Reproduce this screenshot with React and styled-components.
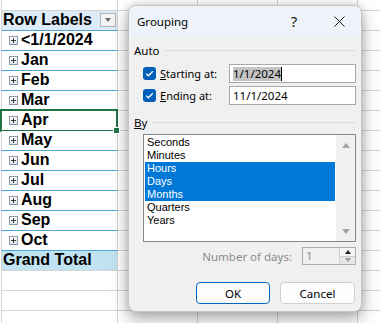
import React from 'react'
import styled, { createGlobalStyle } from 'styled-components'

const GlobalStyle = createGlobalStyle`
  * { box-sizing: border-box; }
  html, body { margin: 0; padding: 0; background: #fff; }
  body { width: 380px; height: 323px; overflow: hidden; }
`

const GRID = '#d4d4d4'
const PIVOT_LINE = '#4ea6dc'

const Sheet = styled.div`
  position: relative;
  width: 380px;
  height: 323px;
  overflow: hidden;
  background: #fff;
`

const Row = styled.div`
  display: flex;
  height: ${(p) => p.$h || 20}px;
  padding-left: 1px;
`

const LabelCell = styled.div`
  position: relative;
  flex: none;
  width: 117px;
  display: flex;
  align-items: flex-end;
  padding: 0 0 1px ${(p) => (p.$indent ? 7 : 1)}px;
  border-left: 1px solid ${GRID};
  border-right: 1px solid ${GRID};
  border-bottom: 1px solid ${(p) => (p.$pivot ? PIVOT_LINE : GRID)};
  background: ${(p) => p.$bg || '#fff'};
  font-family: 'Liberation Sans', Arial, sans-serif;
  font-weight: 700;
  font-size: 16px;
  line-height: 18px;
  color: #000;
  white-space: nowrap;

  ${(p) =>
    p.$selected &&
    `
    &::after {
      content: '';
      position: absolute;
      left: -2px; top: -2px; right: -1px; bottom: -2px;
      border: 2px solid #217346;
    }
    &::before {
      content: '';
      position: absolute;
      right: -3px; bottom: -4px;
      width: 5px; height: 5px;
      background: #217346;
      border: 1px solid #fff;
      z-index: 1;
    }
  `}
`

const Cell = styled.div`
  flex: none;
  width: 80px;
  border-right: 1px solid ${GRID};
  border-bottom: 1px solid ${GRID};
`

const Expand = styled.span`
  flex: none;
  width: 9px;
  height: 9px;
  margin: 0 3px 4px 0;
  border: 1px solid #8a96a8;
  background: linear-gradient(#fdfdfd, #e2e6ec);
  position: relative;
  &::before, &::after {
    content: '';
    position: absolute;
    background: #3b3b3b;
  }
  &::before { left: 1px; right: 1px; top: 3px; height: 1px; }
  &::after { top: 1px; bottom: 1px; left: 3px; width: 1px; }
`

const FilterButton = styled.span`
  position: absolute;
  right: 1px;
  top: 2px;
  width: 16px;
  height: 14px;
  border: 1px solid #b4b4b4;
  background: #f4f4f4;
  display: flex;
  align-items: center;
  justify-content: center;
  &::after {
    content: '';
    border-left: 3.5px solid transparent;
    border-right: 3.5px solid transparent;
    border-top: 4px solid #6b6b6b;
  }
`

/* ---------- dialog ---------- */

const Dialog = styled.div`
  position: absolute;
  left: 128px;
  top: 5px;
  width: 234px;
  height: 307px;
  background: #f0f0f0;
  border: 1px solid #c4c4c4;
  border-radius: 8px;
  box-shadow: 0 8px 18px rgba(0, 0, 0, 0.3), 0 0 8px rgba(0, 0, 0, 0.18);
  display: flex;
  flex-direction: column;
  overflow: hidden;
  font-family: 'Noto Sans', 'Segoe UI', sans-serif;
  font-size: 11px;
  color: #000;
`

const TitleBar = styled.div`
  height: 30px;
  flex: none;
  display: flex;
  align-items: center;
  padding-left: 8px;
  background: #eef3f9;
`

const Title = styled.span`
  flex: 1;
  font-size: 11.5px;
`

const TitleButton = styled.span`
  width: ${(p) => p.$w}px;
  height: 30px;
  display: flex;
  align-items: center;
  justify-content: center;
  font-size: 15px;
  color: #1a1a1a;
`

const Body = styled.div`
  flex: 1;
  display: flex;
  flex-direction: column;
  padding: 0 6px 0 5px;
`

const SectionHead = styled.div`
  display: flex;
  align-items: center;
  gap: 5px;
  height: 16px;
  margin-top: ${(p) => p.$mt}px;
  font-size: 11.5px;
  &::after {
    content: '';
    flex: 1;
    height: 1px;
    background: #dadada;
  }
`

const CheckRow = styled.div`
  display: flex;
  align-items: center;
  height: 19px;
  margin-top: ${(p) => p.$mt}px;
  padding-left: 9px;
`

const Check = styled.span`
  flex: none;
  width: 13px;
  height: 13px;
  border-radius: 3px;
  background: #005fb8;
  display: flex;
  align-items: center;
  justify-content: center;
`

const CheckLabel = styled.span`
  width: 69px;
  margin-left: 4px;
  white-space: nowrap;
`

const Input = styled.div`
  width: 127px;
  height: 19px;
  margin-right: -1px;
  border: 1px solid #a8a8a8;
  background: #fff;
  display: flex;
  align-items: center;
  padding-left: 3px;
  font-size: 11.5px;
`

const Highlight = styled.span`
  background: #c4c4c4;
  border-right: 1px solid #000;
  line-height: 14px;
`

const ListBox = styled.div`
  display: flex;
  width: 213px;
  height: 108px;
  margin: 4px -1px 0 9px;
  border: 1px solid #828790;
  background: #fff;
`

const Items = styled.div`
  flex: 1;
  padding: 1px;
`

const Item = styled.div`
  height: 13px;
  line-height: 13px;
  padding-left: 2px;
  font-family: 'Liberation Sans', Arial, sans-serif;
  font-size: 11px;
  background: ${(p) => (p.$on ? '#0078d7' : 'transparent')};
  color: ${(p) => (p.$on ? '#fff' : '#000')};
`

const ScrollBar = styled.div`
  width: 19px;
  background: #f0f0f0;
  display: flex;
  flex-direction: column;
  justify-content: space-between;
  align-items: center;
  padding: 8px 0 7px;
`

const Arrow = styled.span`
  width: 0;
  height: 0;
  border-left: 4.5px solid transparent;
  border-right: 4.5px solid transparent;
  ${(p) => (p.$down ? 'border-top' : 'border-bottom')}: 5px solid ${(p) => p.$color || '#a3a3a3'};
`

const SmallArrow = styled(Arrow)`
  border-left-width: 3.5px;
  border-right-width: 3.5px;
  ${(p) => (p.$down ? 'border-top-width' : 'border-bottom-width')}: 4px;
`

const SpinRow = styled.div`
  display: flex;
  justify-content: flex-end;
  align-items: center;
  height: 18px;
  margin: 5px -1px 0 0;
`

const MutedLabel = styled.span`
  color: #8a8a8a;
  margin-right: 10px;
  font-size: 11.5px;
`

const Spin = styled.div`
  width: 54px;
  height: 18px;
  display: flex;
  border: 1px solid #adadad;
  background: #f0f0f0;
`

const SpinValue = styled.span`
  flex: 1;
  padding-left: 3px;
  line-height: 16px;
  color: #8a8a8a;
  font-size: 11.5px;
`

const SpinButtons = styled.div`
  width: 16px;
  display: flex;
  flex-direction: column;
  border-left: 1px solid #d0d0d0;
`

const SpinHalf = styled.span`
  flex: 1;
  display: flex;
  align-items: center;
  justify-content: center;
  background: ${(p) => (p.$down ? '#e6e6e6' : '#f4f4f4')};
  border-top: ${(p) => (p.$down ? '1px solid #d0d0d0' : 'none')};
`

const ButtonRow = styled.div`
  display: flex;
  justify-content: flex-end;
  gap: 10px;
  margin-top: 17px;
`

const Button = styled.button`
  width: ${(p) => p.$w}px;
  height: 22px;
  padding: 0;
  border-radius: 4px;
  border: 1px solid ${(p) => (p.$primary ? '#0067c0' : '#d0d0d0')};
  background: #fdfdfd;
  font-family: inherit;
  font-size: 11.5px;
  color: #000;
`

const CheckIcon = () => (
  <svg width="11" height="11" viewBox="0 0 11 11">
    <path d="M2.2 5.6 L4.4 7.8 L8.8 3.2" fill="none" stroke="#fff" strokeWidth="1.3" />
  </svg>
)

const CloseIcon = () => (
  <svg width="11" height="11" viewBox="0 0 11 11">
    <path d="M0.5 0.5 L10.5 10.5 M10.5 0.5 L0.5 10.5" stroke="#1a1a1a" strokeWidth="1" />
  </svg>
)

const pivotRows = ['<1/1/2024', 'Jan', 'Feb', 'Mar', 'Apr', 'May', 'Jun', 'Jul', 'Aug', 'Sep', 'Oct']
const units = ['Seconds', 'Minutes', 'Hours', 'Days', 'Months', 'Quarters', 'Years']
const chosen = ['Hours', 'Days', 'Months']

const Others = () => (
  <>
    <Cell />
    <Cell />
    <Cell />
    <Cell />
  </>
)

export default function App() {
  return (
    <Sheet>
      <GlobalStyle />
      <Row $h={11}>
        <LabelCell />
        <Others />
      </Row>
      <Row>
        <LabelCell $pivot $bg="#ddebf7">
          Row Labels
          <FilterButton />
        </LabelCell>
        <Others />
      </Row>
      {pivotRows.map((r) => (
        <Row key={r}>
          <LabelCell $pivot $indent $selected={r === 'Apr'}>
            <Expand />
            {r}
          </LabelCell>
          <Others />
        </Row>
      ))}
      <Row>
        <LabelCell $bg="#c0e2f1">Grand Total</LabelCell>
        <Others />
      </Row>
      {[0, 1, 2].map((i) => (
        <Row key={i}>
          <LabelCell />
          <Others />
        </Row>
      ))}

      <Dialog>
        <TitleBar>
          <Title>Grouping</Title>
          <TitleButton $w={46}>?</TitleButton>
          <TitleButton $w={44}>
            <CloseIcon />
          </TitleButton>
        </TitleBar>
        <Body>
          <SectionHead $mt={6}>Auto</SectionHead>
          <CheckRow $mt={6}>
            <Check>
              <CheckIcon />
            </Check>
            <CheckLabel>
              <u>S</u>tarting at:
            </CheckLabel>
            <Input>
              <Highlight>1/1/2024</Highlight>
            </Input>
          </CheckRow>
          <CheckRow $mt={3}>
            <Check>
              <CheckIcon />
            </Check>
            <CheckLabel>
              <u>E</u>nding at:
            </CheckLabel>
            <Input>11/1/2024</Input>
          </CheckRow>
          <SectionHead $mt={9}>
            <span>
              <u>B</u>y
            </span>
          </SectionHead>
          <ListBox>
            <Items>
              {units.map((u) => (
                <Item key={u} $on={chosen.includes(u)}>
                  {u}
                </Item>
              ))}
            </Items>
            <ScrollBar>
              <Arrow />
              <Arrow $down />
            </ScrollBar>
          </ListBox>
          <SpinRow>
            <MutedLabel>Number of days:</MutedLabel>
            <Spin>
              <SpinValue>1</SpinValue>
              <SpinButtons>
                <SpinHalf>
                  <SmallArrow $color="#222" />
                </SpinHalf>
                <SpinHalf $down>
                  <SmallArrow $down $color="#9a9a9a" />
                </SpinHalf>
              </SpinButtons>
            </Spin>
          </SpinRow>
          <ButtonRow>
            <Button $primary $w={74}>OK</Button>
            <Button $w={75}>Cancel</Button>
          </ButtonRow>
        </Body>
      </Dialog>
    </Sheet>
  )
}
